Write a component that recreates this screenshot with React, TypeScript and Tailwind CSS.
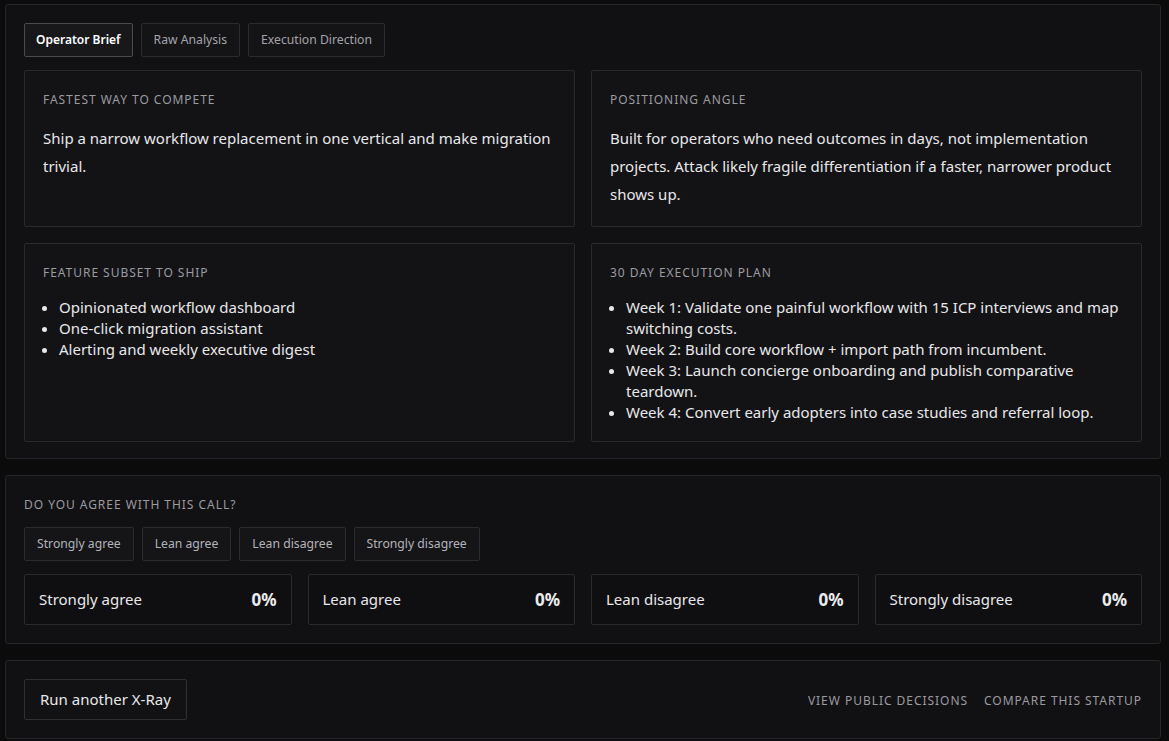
import { useState } from 'react';

const TABS = ['Operator Brief', 'Raw Analysis', 'Execution Direction'];
const VOTES = ['Strongly agree', 'Lean agree', 'Lean disagree', 'Strongly disagree'];
const FEATURES = ['Opinionated workflow dashboard', 'One-click migration assistant', 'Alerting and weekly executive digest'];
const PLAN = [
  'Week 1: Validate one painful workflow with 15 ICP interviews and map switching costs.',
  'Week 2: Build core workflow + import path from incumbent.',
  'Week 3: Launch concierge onboarding and publish comparative teardown.',
  'Week 4: Convert early adopters into case studies and referral loop.',
];

function Label({ children }: { children: string }) {
  return <p className="text-[12px] leading-[22px] tracking-[0.08em] uppercase text-[#9b9ba0]">{children}</p>;
}

function Card({ title, children }: { title: string; children: React.ReactNode }) {
  return (
    <div className="rounded-[2px] border border-[#2a2a2e] bg-[#131316] p-[18px]">
      <Label>{title}</Label>
      <div className="mt-[13px]">{children}</div>
    </div>
  );
}

function BulletList({ items }: { items: string[] }) {
  return (
    <ul className="list-disc pl-[16px] text-[15px] leading-[21px] text-[#e8e8ea] marker:text-[#e8e8ea]">
      {items.map((item) => (
        <li key={item}>{item}</li>
      ))}
    </ul>
  );
}

export default function App() {
  const [tab, setTab] = useState(0);

  return (
    <div className="min-h-screen bg-[#0b0b0c] pl-[5px] pr-[8px] pt-[4px] font-['Noto_Sans',sans-serif]">
      <div className="flex flex-col gap-[16px]">
        <section className="rounded-[3px] border border-[#26262a] bg-[#111113] px-[18px] pt-[18px] pb-[16px]">
          <div className="flex gap-[8px]">
            {TABS.map((t, i) => (
              <button
                key={t}
                onClick={() => setTab(i)}
                className={
                  i === tab
                    ? 'h-[34px] rounded-[2px] border border-[#4a4a50] bg-[#18181b] px-[11px] text-[12px] font-semibold text-white'
                    : 'h-[34px] rounded-[2px] border border-[#2c2c30] bg-[#141417] px-[12px] text-[12.2px] text-[#a3a3a8]'
                }
              >
                {t}
              </button>
            ))}
          </div>
          <div className="mt-[13px] grid grid-cols-2 gap-[16px]">
            <Card title="Fastest way to compete">
              <p className="text-[15px] leading-[28px] text-[#e8e8ea]">
                Ship a narrow workflow replacement in one vertical and make migration trivial.
              </p>
            </Card>
            <Card title="Positioning angle">
              <p className="text-[15px] leading-[28px] text-[#e8e8ea]">
                Built for operators who need outcomes in days, not implementation projects. Attack likely fragile
                differentiation if a faster, narrower product shows up.
              </p>
            </Card>
            <Card title="Feature subset to ship">
              <BulletList items={FEATURES} />
            </Card>
            <Card title="30 day execution plan">
              <BulletList items={PLAN} />
            </Card>
          </div>
        </section>

        <section className="rounded-[3px] border border-[#26262a] bg-[#111113] p-[18px]">
          <Label>Do you agree with this call?</Label>
          <div className="mt-[11px] flex gap-[8px]">
            {VOTES.map((v) => (
              <button
                key={v}
                className="h-[34px] rounded-[2px] border border-[#2c2c30] bg-[#151518] px-[12px] text-[12.2px] text-[#b4b4b8]"
              >
                {v}
              </button>
            ))}
          </div>
          <div className="mt-[13px] grid grid-cols-4 gap-[16px]">
            {VOTES.map((v) => (
              <div
                key={v}
                className="flex h-[51px] items-center justify-between rounded-[2px] border border-[#2a2a2e] bg-[#0f0f11] px-[14px]"
              >
                <span className="text-[15px] text-[#e8e8ea]">{v}</span>
                <span className="text-[17px] font-bold text-[#ececee]">0%</span>
              </div>
            ))}
          </div>
        </section>

        <section className="flex items-center justify-between rounded-[3px] border border-[#26262a] bg-[#111113] p-[18px]">
          <button className="h-[41px] rounded-[2px] border border-[#2f2f33] bg-[#121214] px-[15px] text-[15px] text-[#e8e8ea]">
            Run another X-Ray
          </button>
          <div className="flex gap-[16px] pt-[2px] text-[12px] tracking-[0.08em] uppercase text-[#9b9ba0]">
            <a href="#">View public decisions</a>
            <a href="#">Compare this startup</a>
          </div>
        </section>
      </div>
    </div>
  );
}
